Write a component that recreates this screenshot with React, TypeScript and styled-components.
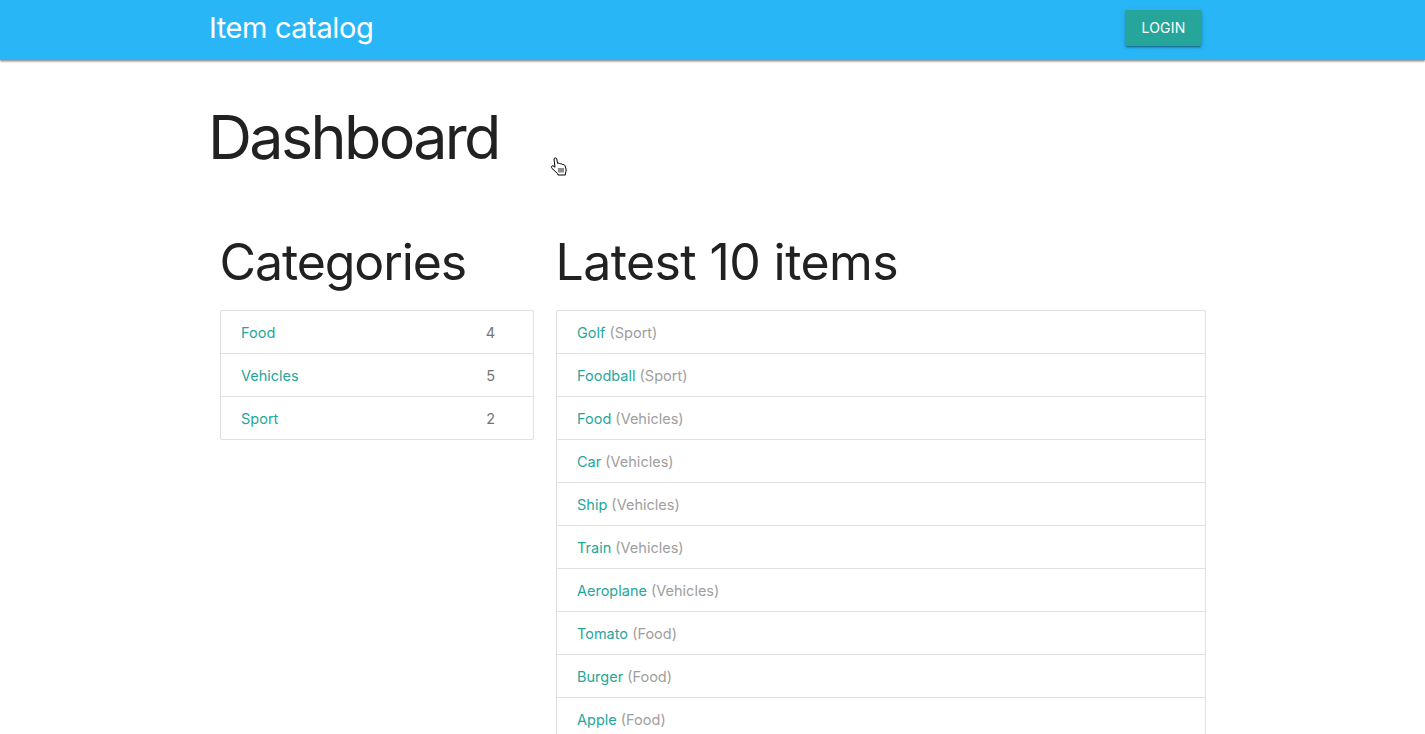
import React from 'react';
import styled, { createGlobalStyle } from 'styled-components';

const GlobalStyle = createGlobalStyle`
  html, body {
    margin: 0;
    padding: 0;
    height: 734px;
    overflow: hidden;
    background: #fff;
    font-family: Inter, 'Liberation Sans', sans-serif;
    color: rgba(0, 0, 0, 0.87);
  }
`;

const NavBar = styled.nav`
  height: 60px;
  background-color: #29b6f6;
  box-shadow: 0 1px 2px rgba(0, 0, 0, 0.4), 0 2px 2px rgba(0, 0, 0, 0.14);
  position: relative;
`;

const NavInner = styled.div`
  width: 993px;
  height: 60px;
  margin-left: 209px;
  display: flex;
  align-items: center;
  justify-content: space-between;
`;

const Brand = styled.a`
  font-size: 29px;
  line-height: 56px;
  letter-spacing: -0.4px;
  margin-top: -4px;
  color: #fff;
`;

const LoginButton = styled.button`
  width: 77px;
  height: 36px;
  border: 0;
  border-radius: 2px;
  padding: 0 0 1px;
  margin-top: -4px;
  background-color: #26a69a;
  color: #fff;
  font-family: inherit;
  font-size: 14px;
  letter-spacing: 0.2px;
  box-shadow: 0 2px 2px rgba(0, 0, 0, 0.14), 0 3px 1px -2px rgba(0, 0, 0, 0.2),
    0 1px 5px rgba(0, 0, 0, 0.12);
`;

const Page = styled.main`
  margin-left: 209px;
`;

const PageTitle = styled.h1`
  margin: 0 0 0 -1px;
  padding-top: 35px;
  font-size: 61px;
  line-height: 84px;
  font-weight: 400;
  letter-spacing: -2.65px;
  color: #212121;
`;

const Columns = styled.div`
  display: grid;
  grid-template-columns: 314px 650px;
  column-gap: 22px;
  margin-top: 55px;
  padding-left: 11px;
`;

const Column = styled.section``;

const SectionTitle = styled.h2<{ $tracking: number }>`
  margin: 0 0 20px -0.5px;
  font-size: 50px;
  line-height: 56px;
  font-weight: 400;
  letter-spacing: ${({ $tracking }) => $tracking}px;
  color: #212121;
`;

const Collection = styled.ul`
  list-style: none;
  margin: 0;
  padding: 0;
  border: 1px solid #e0e0e0;
  border-radius: 2px;
`;

const Row = styled.li`
  height: 42px;
  padding: 0 38px 0 20px;
  display: flex;
  align-items: center;
  justify-content: space-between;
  font-size: 14.5px;
  border-bottom: 1px solid #e0e0e0;

  &:last-child {
    border-bottom: 0;
  }
`;

const RowLabel = styled.span`
  white-space: pre;
`;

const ItemLink = styled.a`
  color: #26a69a;
`;

const Muted = styled.span`
  color: #9e9e9e;
`;

const Count = styled.span`
  color: #757575;
`;

const Cursor = styled.svg`
  position: absolute;
  left: 550px;
  top: 156px;
`;

const categories = [
  { name: 'Food', count: 4 },
  { name: 'Vehicles', count: 5 },
  { name: 'Sport', count: 2 },
];

const items = [
  { name: 'Golf', category: 'Sport' },
  { name: 'Foodball', category: 'Sport' },
  { name: 'Food', category: 'Vehicles' },
  { name: 'Car', category: 'Vehicles' },
  { name: 'Ship', category: 'Vehicles' },
  { name: 'Train', category: 'Vehicles' },
  { name: 'Aeroplane', category: 'Vehicles' },
  { name: 'Tomato', category: 'Food' },
  { name: 'Burger', category: 'Food' },
  { name: 'Apple', category: 'Food' },
];

const App: React.FC = () => (
  <>
    <GlobalStyle />
    <NavBar>
      <NavInner>
        <Brand>Item catalog</Brand>
        <LoginButton>LOGIN</LoginButton>
      </NavInner>
    </NavBar>
    <Page>
      <PageTitle>Dashboard</PageTitle>
      <Columns>
        <Column>
          <SectionTitle $tracking={-1.1}>Categories</SectionTitle>
          <Collection>
            {categories.map((c) => (
              <Row key={c.name}>
                <ItemLink>{c.name}</ItemLink>
                <Count>{c.count}</Count>
              </Row>
            ))}
          </Collection>
        </Column>
        <Column>
          <SectionTitle $tracking={-0.6}>Latest 10 items</SectionTitle>
          <Collection>
            {items.map((item) => (
              <Row key={item.name}>
                <RowLabel>
                  <ItemLink>{item.name}</ItemLink>
                  <Muted> ({item.category})</Muted>
                </RowLabel>
              </Row>
            ))}
          </Collection>
        </Column>
      </Columns>
    </Page>
    <Cursor width="18" height="20" viewBox="0 0 18 20">
      <path
        d="M4 3C4 1.600 6.600 1.600 6.800 3L7.600 7.500C8.400 6.800 9.600 7 10 8C10.800 7.400 12 7.700 12.300 8.600C13.200 8.200 14.600 8.600 15 9.800L16 13C16.300 14.600 16 16 15.500 17L15.300 19H8L7.500 17.500L2 12.500C0.800 11.300 1.300 9.500 3 9.800L5 11.200Z"
        fill="#fff"
        stroke="#000"
        strokeWidth="1"
        strokeLinejoin="round"
      />
      <path d="M9 12V16.500M11 12V16.500M13 12V16.500" stroke="#000" strokeWidth="0.9" />
    </Cursor>
  </>
);

export default App;
